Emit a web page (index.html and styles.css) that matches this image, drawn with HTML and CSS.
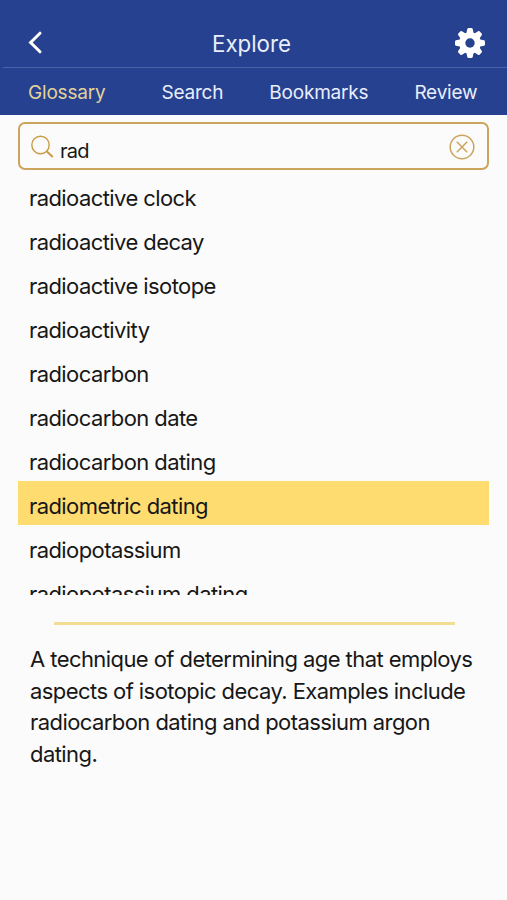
FILE: index.html
```html
<!DOCTYPE html>
<html lang="en">

<head>
    <meta charset="UTF-8">
    <title>Explore</title>

    <!-- CSS -->
    <link rel="stylesheet" href="styles.css">

</head>

<body>
    <header>
        <div class="title-bar">
            <svg class="back" viewBox="0 0 16 26">
                <path d="M13 3.2 L3.6 12.5 L13 21.8" />
            </svg>
            <h1>Explore</h1>
            <svg class="gear" viewBox="-15 -15 30 30">
                <g id="teeth">
                    <path id="tooth" d="M-3.8 -9 L-2.7 -14 Q-2.4 -15 -1.5 -15 H1.5 Q2.4 -15 2.7 -14 L3.8 -9 V9 L2.7 14 Q2.4 15 1.5 15 H-1.5 Q-2.4 15 -2.7 14 L-3.8 9 Z" />
                    <use href="#tooth" transform="rotate(45)" />
                    <use href="#tooth" transform="rotate(90)" />
                    <use href="#tooth" transform="rotate(135)" />
                </g>
                <circle r="10.8" />
                <circle class="hole" r="4.7" />
            </svg>
        </div>
        <nav>
            <a class="active">Glossary</a>
            <a>Search</a>
            <a>Bookmarks</a>
            <a>Review</a>
        </nav>
    </header>

    <main>
        <div class="search-box">
            <svg class="magnifier" viewBox="0 0 24 24">
                <circle cx="9.5" cy="10" r="8.7" />
                <path d="M15.6 16.2 L21.8 22" />
            </svg>
            <span class="query">rad</span>
            <svg class="clear" viewBox="0 0 26 26">
                <circle cx="13" cy="13" r="11.8" />
                <path d="M7.8 7.8 L18.2 18.2 M18.2 7.8 L7.8 18.2" />
            </svg>
        </div>

        <ul class="terms">
            <li>radioactive clock</li>
            <li>radioactive decay</li>
            <li>radioactive isotope</li>
            <li>radioactivity</li>
            <li>radiocarbon</li>
            <li>radiocarbon date</li>
            <li>radiocarbon dating</li>
            <li class="selected">radiometric dating</li>
            <li>radiopotassium</li>
            <li>radiopotassium dating</li>
        </ul>

        <hr>

        <p class="definition">A technique of determining age that employs aspects of isotopic decay. Examples include radiocarbon dating and potassium argon dating.</p>
    </main>
</body>

</html>
```
FILE: styles.css
```css
body {
    margin: 0;
    font-family: Inter, "Liberation Sans", sans-serif;
    background-color: #fbfbfb;
    color: #171717;
}

header {
    height: 115px;
    background-color: #26418f;
    color: #e9eefc;
}

.title-bar {
    display: flex;
    align-items: center;
    justify-content: space-between;
    box-sizing: border-box;
    height: 67px;
    padding: 18px 22px 0 27px;
}

h1 {
    margin: 3px 0 0 5px;
    font-size: 22.3px;
    font-weight: 400;
    line-height: 28px;
}

.back {
    width: 16px;
    height: 26px;
    fill: none;
    stroke: #fff;
    stroke-width: 3;
    stroke-linecap: round;
}

.gear {
    width: 30px;
    height: 30px;
    fill: #fff;
}

.gear .hole {
    fill: #26418f;
}

nav {
    display: flex;
    gap: 46px;
    height: 47px;
    margin-left: 3px;
    padding-left: 25px;
    border-top: 1px solid #4a62a8;
    font-size: 19px;
    letter-spacing: -0.2px;
    line-height: 49px;
}

nav .active {
    margin-right: 10px;
    color: #e2d29a;
}

main {
    padding: 7px 18px 0;
}

.search-box {
    display: flex;
    align-items: center;
    box-sizing: border-box;
    height: 48px;
    padding: 2px 12px 0 11px;
    border: 2px solid #cda45c;
    border-radius: 7px;
}

.magnifier {
    width: 24px;
    height: 24px;
    fill: none;
    stroke: #cb9a45;
    stroke-width: 1.4;
}

.magnifier path {
    stroke-width: 2;
}

.query {
    flex: 1;
    padding: 7px 0 0 5px;
    font-size: 20px;
    letter-spacing: -0.8px;
    line-height: 24px;
}

.clear {
    width: 26px;
    height: 26px;
    fill: none;
    stroke: #cda45c;
    stroke-width: 1.5;
}

.terms {
    height: 422px;
    margin: 0;
    padding: 3px 0 0;
    overflow: hidden;
    list-style: none;
    font-size: 22px;
    letter-spacing: -0.58px;
}

.terms li {
    height: 44px;
    padding-left: 11px;
    line-height: 50px;
}

.terms .selected {
    background-color: #ffdc70;
}

hr {
    height: 3px;
    margin: 27px 34px 0 36px;
    border: none;
    background-color: #f2dd92;
}

.definition {
    margin: 19px 0 0;
    padding-left: 12px;
    font-size: 22px;
    letter-spacing: -0.57px;
    line-height: 31.7px;
}
```
